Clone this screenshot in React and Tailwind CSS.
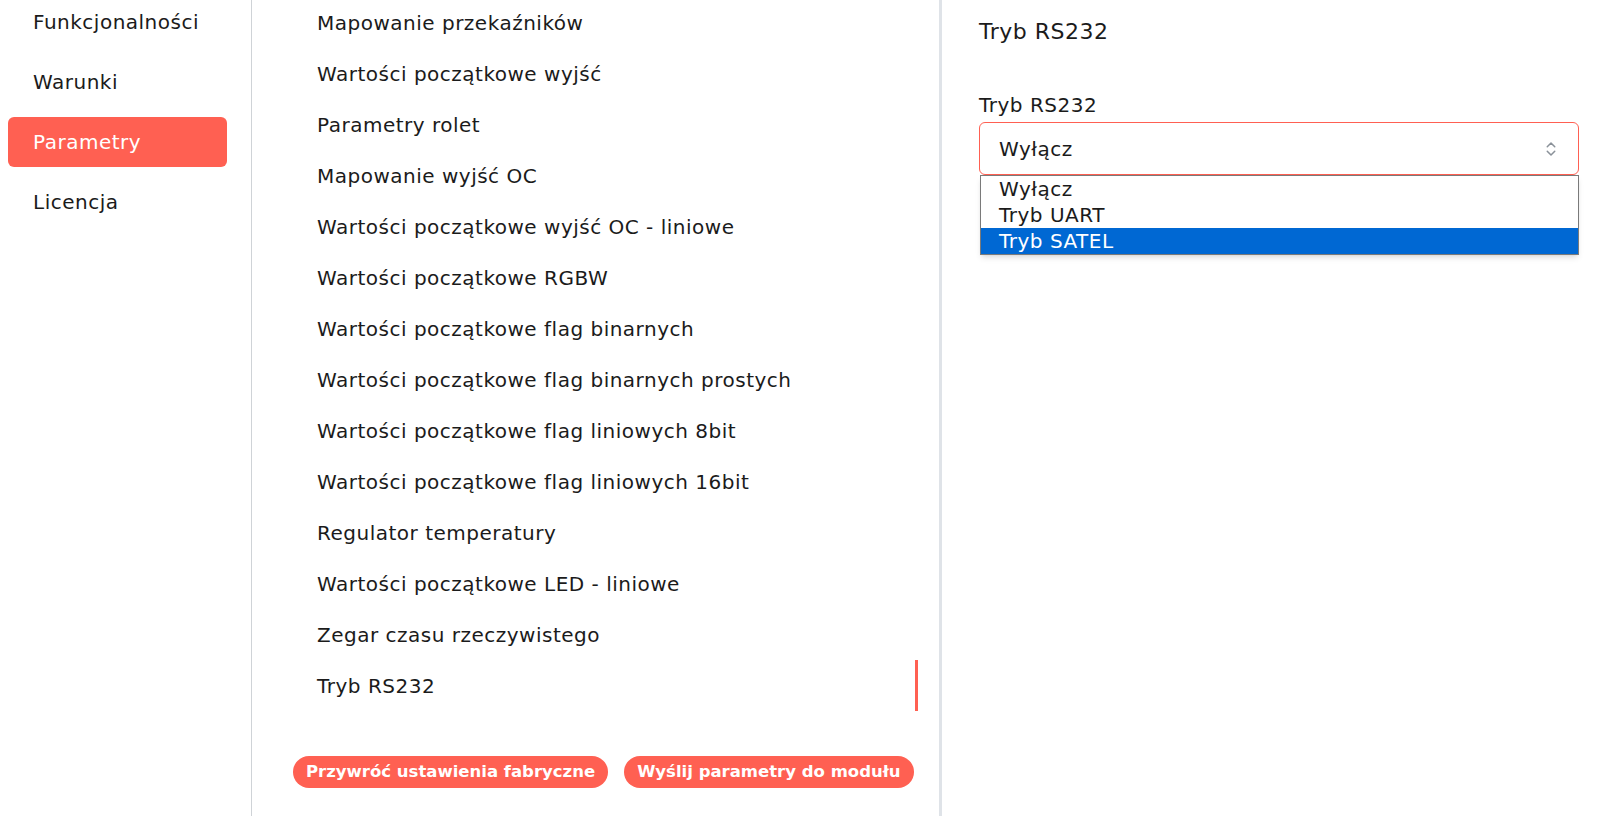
import React from "react";
import { ChevronsUpDown } from "lucide-react";

const navItems = ["Funkcjonalności", "Warunki", "Parametry", "Licencja"];

const paramItems = [
  "Mapowanie przekaźników",
  "Wartości początkowe wyjść",
  "Parametry rolet",
  "Mapowanie wyjść OC",
  "Wartości początkowe wyjść OC - liniowe",
  "Wartości początkowe RGBW",
  "Wartości początkowe flag binarnych",
  "Wartości początkowe flag binarnych prostych",
  "Wartości początkowe flag liniowych 8bit",
  "Wartości początkowe flag liniowych 16bit",
  "Regulator temperatury",
  "Wartości początkowe LED - liniowe",
  "Zegar czasu rzeczywistego",
  "Tryb RS232",
];

const options = ["Wyłącz", "Tryb UART", "Tryb SATEL"];

const App = () => {
  return (
    <div
      className="h-[816px] w-full bg-white text-[#1b1b1b] flex overflow-hidden tracking-[0.5px]"
      style={{ fontFamily: '"DejaVu Sans", "Noto Sans", sans-serif' }}
    >
      {/* sidebar */}
      <div className="w-[252px] shrink-0 border-r border-[#cfd3d7] pl-2 pr-[24px] -mt-[3px]">
        <div className="flex flex-col gap-[10px]">
          {navItems.map((item) => (
            <div
              key={item}
              className={`h-[50px] flex items-center pl-[25px] rounded-md text-[20px] ${
                item === "Parametry" ? "bg-[#ff6052] text-white" : ""
              }`}
            >
              {item}
            </div>
          ))}
        </div>
      </div>

      {/* parameter list */}
      <div className="w-[690px] shrink-0 border-r-[3px] border-[#dfe3e8] pl-[41px] pr-[21px] flex flex-col">
        <div className="-mt-[3px]">
          {paramItems.map((item, idx) => (
            <div
              key={idx}
              className={`h-[51px] flex items-center pl-6 text-[20px] ${
                idx === paramItems.length - 1
                  ? "border-r-[3px] border-[#ff6052]"
                  : ""
              }`}
            >
              {item}
            </div>
          ))}
        </div>
        <div className="flex gap-4 mt-[45px]">
          <button className="h-8 px-[13px] rounded-full bg-[#ff6052] text-white text-[16.5px] font-bold whitespace-nowrap tracking-normal">
            Przywróć ustawienia fabryczne
          </button>
          <button className="h-8 px-[13px] rounded-full bg-[#ff6052] text-white text-[16.5px] font-bold whitespace-nowrap tracking-normal">
            Wyślij parametry do modułu
          </button>
        </div>
      </div>

      {/* details */}
      <div className="flex-1 pl-[37px] pr-[18px]">
        <h2 className="text-[22px] mt-[16px] leading-8">Tryb RS232</h2>
        <label className="block text-[20px] font-medium mt-[42px] mb-[2px]">
          Tryb RS232
        </label>
        <div className="relative">
          <div className="h-[53px] border border-[#ff6052] rounded-md flex items-center justify-between pl-[19px] pr-[18px] text-[20px]">
            <span>Wyłącz</span>
            <ChevronsUpDown size={18} className="text-[#8a9199]" />
          </div>
          <div className="absolute left-[1px] right-0 top-[53px] bg-white border border-[#7a7a7a] shadow-md text-[20px] leading-[26px]">
            {options.map((o) => (
              <div
                key={o}
                className={`pl-[18px] ${
                  o === "Tryb SATEL" ? "bg-[#0068d3] text-white" : ""
                }`}
              >
                {o}
              </div>
            ))}
          </div>
        </div>
      </div>
    </div>
  );
};

export default App;
